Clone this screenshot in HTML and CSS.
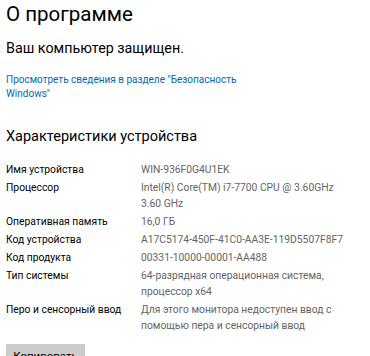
FILE: index.html
```html
<!DOCTYPE html>
<html lang="ru">

<head>
    <meta charset="UTF-8">
    <title>О программе</title>
    <meta name="viewport" content="width=device-width, initial-scale=1.0">
    <link rel="stylesheet" href="styles.css">
</head>

<body>
    <h1 class="page_title">О программе</h1>
    <p class="status">Ваш компьютер защищен.</p>
    <a class="link" href="#">Просмотреть сведения в разделе "Безопасность Windows"</a>

    <h2 class="section_title">Характеристики устройства</h2>
    <!-- характеристики -->
    <div class="specs">
        <div class="spec_name">Имя устройства</div>
        <div class="spec_value">WIN-936F0G4U1EK</div>
        <div class="spec_name">Процессор</div>
        <div class="spec_value">Intel(R) Core(TM) i7-7700 CPU @ 3.60GHz<br>3.60 GHz</div>
        <div class="spec_name">Оперативная память</div>
        <div class="spec_value">16,0 ГБ</div>
        <div class="spec_name">Код устройства</div>
        <div class="spec_value">A17C5174-450F-41C0-AA3E-119D5507F8F7</div>
        <div class="spec_name">Код продукта</div>
        <div class="spec_value">00331-10000-00001-AA488</div>
        <div class="spec_name">Тип системы</div>
        <div class="spec_value">64-разрядная операционная система, процессор x64</div>
        <div class="spec_name">Перо и сенсорный ввод</div>
        <div class="spec_value">Для этого монитора недоступен ввод с помощью пера и сенсорный ввод</div>
    </div>
    <button class="btn">Копировать</button>
</body>

</html>
```

FILE: styles.css
```css
body {
    margin: 0;
    padding: 0 6px;
    background-color: white;
    color: black;
    font-family: Roboto, "Liberation Sans", sans-serif;
}

.page_title {
    margin: 0;
    font-size: 20.5px;
    font-weight: normal;
    line-height: 28px;
}

.status {
    margin: 10px 0 0;
    font-size: 14.3px;
    line-height: 20px;
}

.link {
    display: block;
    width: 250px;
    margin-top: 15px;
    font-size: 10px;
    line-height: 14px;
    color: rgb(0, 103, 184);
    text-decoration: none;
}

.section_title {
    margin: 25px 0 0;
    font-size: 14.5px;
    font-weight: normal;
    line-height: 22px;
}

.specs {
    display: grid;
    grid-template-columns: 135px 215px;
    row-gap: 2px;
    margin-top: 14px;
    font-size: 10.3px;
    line-height: 16px;
}

.spec_name {
    color: black;
}

.spec_value {
    color: rgb(100, 100, 100);
}

.btn {
    display: block;
    width: 79px;
    height: 24px;
    margin-top: 10px;
    padding: 0;
    border: none;
    background-color: rgb(204, 204, 204);
    font-family: inherit;
    font-size: 11.5px;
    color: black;
}
```
